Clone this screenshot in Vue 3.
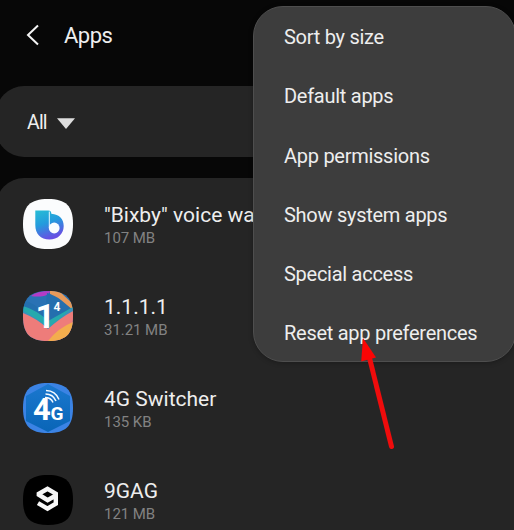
<script setup>
const apps = [
  { id: 'bixby', name: '"Bixby" voice wa', size: '107 MB' },
  { id: 'dns', name: '1.1.1.1', size: '31.21 MB' },
  { id: 'switcher', name: '4G Switcher', size: '135 KB' },
  { id: 'gag', name: '9GAG', size: '121 MB' }
]
const menu = ['Sort by size', 'Default apps', 'App permissions', 'Show system apps', 'Special access', 'Reset app preferences']
const tile = 'M25 0C43 0 50 7 50 25S43 50 25 50 0 43 0 25 7 0 25 0Z'
</script>

<template>
  <main class="screen">
    <header class="header">
      <svg class="back" width="14" height="22" viewBox="0 0 14 22"><path d="M12 1.5 2 11l10 9.5" fill="none" stroke="#f4f4f4" stroke-width="2" /></svg>
      <h1>Apps</h1>
    </header>

    <section class="filter">
      <span>All</span>
      <svg width="18" height="11" viewBox="0 0 18 11"><path d="M0 .3h18L9 11Z" fill="#dedede" /></svg>
    </section>

    <section class="list">
      <article v-for="app in apps" :key="app.id" class="app">
        <svg class="icon" width="50" height="50" viewBox="0 0 50 50">
          <g v-if="app.id === 'bixby'">
            <defs>
              <linearGradient id="bixbyFill" x1="0" y1="0" x2=".35" y2="1">
                <stop offset="0" stop-color="#27bdd5" /><stop offset=".5" stop-color="#249bdd" /><stop offset="1" stop-color="#6651e3" />
              </linearGradient>
            </defs>
            <path :d="tile" fill="#fbfcfd" />
            <path d="M12.3 11.5h13q3 0 3 3v.2C36.5 15.4 40.7 20 40.7 27 40.7 35 34.5 40.6 26.5 40.6 17.5 40.6 12.3 34.8 12.3 26Z" fill="url(#bixbyFill)" />
            <path d="M26.3 12.5V29" fill="none" stroke="#e9f9ff" stroke-width="1" />
            <circle cx="31.2" cy="29" r="5.4" fill="#fafdff" />
          </g>
          <g v-else-if="app.id === 'dns'" clip-path="url(#dnsClip)">
            <defs><clipPath id="dnsClip"><path :d="tile" /></clipPath></defs>
            <path d="M0 0h50v50H0Z" fill="#2a72b4" />
            <path d="M8 5Q14 0 27 0q0 3-6 5-7 1-13 0Z" fill="#b43bc6" />
            <path d="M27 0h9l14 13v7q-12-5-23-17Z" fill="#e79a5b" />
            <path d="M24 2q9 3 14 7l12 10-25 24L0 22V9q12 3 22 14Z" fill="#246fae" />
            <path d="M0 15q14 4 25 15l25-14v6L25 38 0 22Z" fill="#26a9ad" />
            <path d="M50 16v9L25 42 0 26v-6q15 8 25 17Q37 28 50 16Z" fill="#3c8fbd" />
            <path d="M0 22q15 6 25 16 12-11 25-18v30H0Z" fill="#ee7c7a" />
            <path d="M25 50Q35 37 50 31v19Z" fill="#f3ad4d" />
            <text x="12.5" y="37" class="one">1</text>
            <text x="30.5" y="19.5" class="four">4</text>
          </g>
          <g v-else-if="app.id === 'switcher'" clip-path="url(#switchClip)">
            <defs>
              <clipPath id="switchClip"><path :d="tile" /></clipPath>
              <linearGradient id="blueFill" x1="0" y1="0" x2="0" y2="1">
                <stop offset="0" stop-color="#1b78cf" /><stop offset="1" stop-color="#0965b7" />
              </linearGradient>
            </defs>
            <path d="M0 0h50v50H0Z" fill="#3b83e4" />
            <path d="m25 1 22 12v25L25 49 3 38V13Z" fill="url(#blueFill)" />
            <text x="10" y="36.7" class="big">4</text>
            <text x="27.5" y="36.5" class="gee">G</text>
            <path d="M22 14.5q6 0 8 5M22.5 11q7.5 0 10.5 7M23 7.5q9.5.2 13 9" fill="none" stroke="#f3faff" stroke-width="1.5" />
          </g>
          <g v-else>
            <path :d="tile" fill="#000" />
            <path d="M32.8 20.5 24.6 25.2 15.8 19.7v-.9L24.5 13.8l8.3 4.9v10L24.5 33.6 15 28.2" fill="none" stroke="#f7f7f7" stroke-width="4.4" />
          </g>
        </svg>
        <div class="copy">
          <h2>{{ app.name }}</h2>
          <p>{{ app.size }}</p>
        </div>
      </article>
    </section>

    <nav class="menu">
      <div v-for="item in menu" :key="item" class="item">{{ item }}</div>
    </nav>

    <svg class="pointer" width="50" height="116" viewBox="0 0 50 116">
      <path d="M14.5 22 36.5 110.5" fill="none" stroke="#ef0c0c" stroke-width="5" stroke-linecap="round" />
      <path d="M8 2 6.2 25.5 21 21.5Z" fill="#fb0505" />
    </svg>
  </main>
</template>

<style>
body { margin: 0; background: #070707; }
</style>
<style scoped>
.screen { position: relative; width: 514px; height: 530px; overflow: hidden; background: #070707; color: #eee; font-family: Roboto, sans-serif; }
.header { display: flex; align-items: center; gap: 24px; height: 72px; padding-left: 26px; box-sizing: border-box; }
h1, h2, p { margin: 0; font-weight: 400; white-space: nowrap; }
h1 { font-size: 22px; line-height: 28px; letter-spacing: -.5px; }
.back { margin-bottom: 3px; }
.filter { display: flex; align-items: center; gap: 10px; height: 71px; margin: 14px -4px 0; padding-left: 31px; box-sizing: border-box; border-radius: 28px; background: #252525; font-size: 19.5px; letter-spacing: -.8px; }
.filter span { padding-top: 2px; }
.filter svg { margin-top: 3px; }
.list { height: 360px; margin: 21px -4px 0; padding: 0 27px; border-radius: 28px 28px 0 0; background: #252525; }
.app { display: flex; align-items: center; gap: 31px; height: 92px; }
.icon { flex: none; display: block; }
.copy { padding-top: 1px; }
h2 { font-size: 21px; line-height: 25px; }
p { margin-top: 1px; color: #828282; font-size: 15px; line-height: 18px; letter-spacing: -.05px; }
.one, .four, .big, .gee { fill: #fff; font-weight: 700; }
.one { font-size: 34px; }
.four { font-size: 12px; }
.big { font-size: 31px; }
.gee { font-size: 19px; }
.menu { position: absolute; left: 253px; top: 6px; width: 263px; height: 356px; box-sizing: border-box; padding: 1px 30px 0; border: 1px solid #4e4e4e; border-radius: 30px; background: #3d3d3d; box-shadow: 0 1px 5px #0004; }
.item { height: 59.3px; line-height: 59.3px; font-size: 20px; letter-spacing: -.27px; white-space: nowrap; }
.pointer { position: absolute; left: 355px; top: 336px; }
</style>
